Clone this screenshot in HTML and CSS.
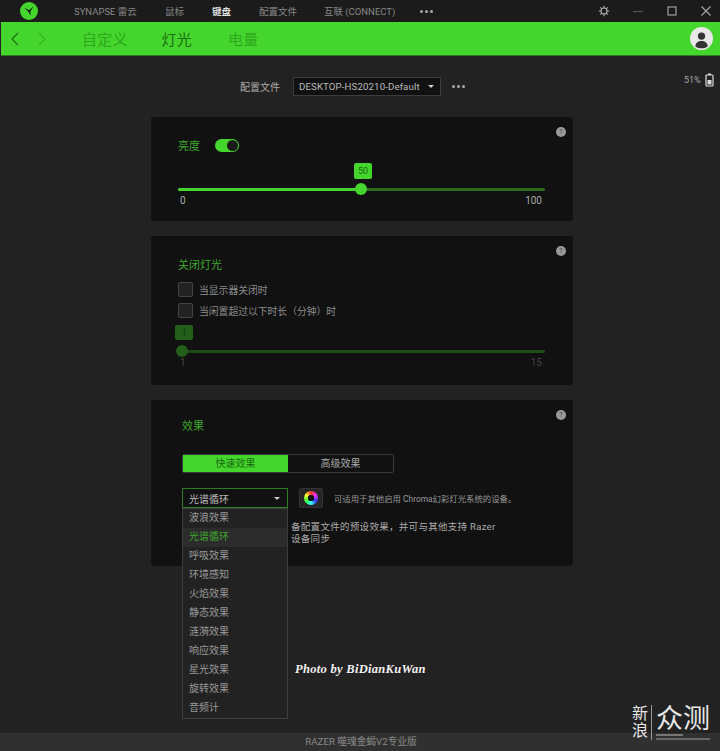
FILE: index.html
```html
<!DOCTYPE html>
<html lang="zh">
<head>
    <meta charset="UTF-8">
    <meta name="viewport" content="width=device-width, initial-scale=1.0">
    <title>Razer Synapse</title>
    <link rel="stylesheet" href="styles.css">
</head>
<body>
    <div class="app">
        <header class="titlebar">
            <div class="logo">
                <svg viewBox="0 0 18 18" width="18" height="18">
                    <circle cx="9" cy="9" r="9" fill="#44d62c"/>
                    <path d="M4 5.5 L9 8.2 L13.5 4.5 L10.3 9.4 L10.6 14 L8.6 10 Z" fill="#161616"/>
                </svg>
            </div>
            <nav class="mainnav">
                <a class="nav-synapse">SYNAPSE 雷云</a>
                <a class="nav-mouse">鼠标</a>
                <a class="nav-keyboard active">键盘</a>
                <a class="nav-profile">配置文件</a>
                <a class="nav-connect">互联 (CONNECT)</a>
                <span class="dots nav-dots"><i></i><i></i><i></i></span>
            </nav>
            <div class="winbtns">
                <svg viewBox="0 0 12 12" width="12" height="12"><circle cx="6" cy="6" r="3" fill="none" stroke="#aaa" stroke-width="1.2"/><path d="M6 0.8V3M6 9v2.2M0.8 6H3M9 6h2.2M2.3 2.3l1.5 1.5M8.2 8.2l1.5 1.5M2.3 9.7l1.5-1.5M8.2 3.8l1.5-1.5" stroke="#aaa" stroke-width="1.2"/></svg>
                <svg viewBox="0 0 12 12" width="12" height="12"><path d="M1 6.5H11" stroke="#555" stroke-width="1.2"/></svg>
                <svg viewBox="0 0 12 12" width="12" height="12"><rect x="2" y="2" width="8" height="8" fill="none" stroke="#aaa" stroke-width="1.1"/></svg>
                <svg viewBox="0 0 12 12" width="12" height="12"><path d="M1.5 1.5L10.5 10.5M10.5 1.5L1.5 10.5" stroke="#aaa" stroke-width="1.1"/></svg>
            </div>
        </header>

        <div class="subbar">
            <svg class="arrow" viewBox="0 0 10 14" width="10" height="14"><path d="M8 1L2 7L8 13" fill="none" stroke="#1f6b17" stroke-width="1.2"/></svg>
            <svg class="arrow arrow-next" viewBox="0 0 10 14" width="10" height="14"><path d="M2 1L8 7L2 13" fill="none" stroke="#3cb526" stroke-width="1.2"/></svg>
            <a class="subtab">自定义</a>
            <a class="subtab current">灯光</a>
            <a class="subtab">电量</a>
            <div class="avatar">
                <svg viewBox="0 0 24 24" width="23" height="23">
                    <circle cx="12" cy="12" r="12" fill="#e8e8e8"/>
                    <circle cx="12" cy="9.5" r="3.8" fill="#333"/>
                    <path d="M5.5 20c0.5-4 3-5.500 6.500-5.500s6 1.500 6.500 5.500c-2 1.600-4 2.300-6.500 2.300s-4.500-0.700-6.500-2.300z" fill="#333"/>
                </svg>
            </div>
        </div>

        <main class="content">
            <div class="profile-row">
                <span class="profile-label">配置文件</span>
                <div class="profile-select">DESKTOP-HS20210-Default<span class="caret"></span></div>
                <span class="dots"><i></i><i></i><i></i></span>
                <div class="battery">
                    <span>51%</span>
                    <svg viewBox="0 0 9 14" width="9" height="14"><rect x="1" y="2" width="7" height="11" rx="1" fill="none" stroke="#ddd" stroke-width="1.2"/><rect x="3" y="0.500" width="3" height="1.500" fill="#ddd"/><rect x="2.500" y="7" width="4" height="4.500" fill="#ddd"/></svg>
                </div>
            </div>

            <section class="card card-brightness">
                <span class="help">?</span>
                <div class="bright-head">
                    <h2>亮度</h2>
                    <span class="toggle"><span class="knob"></span></span>
                </div>
                <div class="slider-wrap">
                    <div class="badge-row"><span class="badge">50</span></div>
                    <div class="track"><div class="fill"></div><span class="thumb"></span></div>
                    <div class="scale"><span>0</span><span>100</span></div>
                </div>
            </section>

            <section class="card card-off">
                <span class="help">?</span>
                <h2>关闭灯光</h2>
                <label class="check"><span class="box"></span>当显示器关闭时</label>
                <label class="check"><span class="box"></span>当闲置超过以下时长（分钟）时</label>
                <div class="slider-wrap off">
                    <span class="badge dim">1</span>
                    <div class="track dim"><span class="thumb"></span></div>
                    <div class="scale"><span>1</span><span>15</span></div>
                </div>
            </section>

            <section class="card card-effect">
                <span class="help">?</span>
                <h2>效果</h2>
                <div class="seg">
                    <span class="seg-on">快速效果</span>
                    <span class="seg-off">高级效果</span>
                </div>
                <div class="effect-row">
                    <div class="effect-select">光谱循环<span class="caret"></span></div>
                    <div class="chroma"><span class="wheel"></span></div>
                    <p class="effect-note">可适用于其他启用 Chroma幻彩灯光系统的设备。</p>
                </div>
                <p class="effect-desc">备配置文件的预设效果，并可与其他支持 Razer<br>设备同步</p>
                <ul class="menu">
                    <li>波浪效果</li>
                    <li class="sel">光谱循环</li>
                    <li>呼吸效果</li>
                    <li>环境感知</li>
                    <li>火焰效果</li>
                    <li>静态效果</li>
                    <li>涟漪效果</li>
                    <li>响应效果</li>
                    <li>星光效果</li>
                    <li>旋转效果</li>
                    <li>音频计</li>
                </ul>
            </section>
        </main>

        <footer class="footer"><span>RAZER 噬魂金蝎V2专业版</span></footer>

        <div class="photo-mark">Photo by BiDianKuWan</div>
        <div class="sina-mark">
            <span class="sina-small">新<br>浪</span>
            <span class="sina-big">众测</span>
        </div>
    </div>
</body>
</html>
```

FILE: styles.css
```css
* {
    box-sizing: border-box;
}
html, body {
    margin: 0;
    height: 100%;
}
body {
    background-color: #222;
    font-family: "Roboto", "Noto Sans CJK SC", sans-serif;
    color: #bbb;
    overflow: hidden;
}
.app {
    position: relative;
    width: 720px;
    height: 751px;
    display: flex;
    flex-direction: column;
    background-color: #222;
}

/* barra superior */
.titlebar {
    height: 22px;
    flex: none;
    display: flex;
    align-items: center;
    background-color: #1b1b1b;
    font-size: 9.5px;
    color: #888;
}
.logo {
    width: 57px;
    padding-left: 20px;
    display: flex;
}
.mainnav {
    display: flex;
    align-items: center;
    padding-left: 17px;
}
.mainnav a {
    white-space: nowrap;
}
.nav-synapse { width: 91px; }
.nav-mouse { width: 47px; }
.nav-keyboard { width: 47px; }
.nav-profile { width: 65px; }
.nav-connect { width: 96px; }
.mainnav .active {
    color: #ddd;
    font-weight: 700;
}
.dots {
    display: inline-flex;
    gap: 2px;
}
.dots i {
    width: 3px;
    height: 3px;
    border-radius: 50%;
    background-color: #aaa;
}
.winbtns {
    margin-left: auto;
    display: flex;
    gap: 22px;
    padding-right: 8px;
}

/* barra verde */
.subbar {
    height: 34px;
    flex: none;
    display: flex;
    align-items: center;
    margin-left: 1px;
    background-color: #44d62c;
    border-bottom: 1px solid #2d7d20;
    font-size: 15px;
}
.arrow {
    margin-left: 9px;
}
.arrow-next {
    margin-left: 17px;
}
.subtab {
    color: #2fa81d;
    margin-right: 36px;
    letter-spacing: 0.2px;
}
.arrow-next + .subtab {
    margin-left: 35px;
}
.subtab.current {
    color: #1e6f12;
    margin-left: -2px;
}
.avatar {
    margin-left: auto;
    margin-right: 7px;
    display: flex;
}

/* contenido */
.content {
    flex: 1;
    display: flex;
    flex-direction: column;
    align-items: flex-start;
    padding-left: 151px;
}
.profile-row {
    position: relative;
    width: 422px;
    height: 61px;
    display: flex;
    align-items: center;
    font-size: 10px;
}
.profile-label {
    margin-left: 89px;
    color: #aaa;
}
.profile-select {
    width: 148px;
    height: 19px;
    margin-left: 13px;
    margin-right: 11px;
    padding-left: 5px;
    display: flex;
    align-items: center;
    background-color: #111;
    border: 1px solid #3c3c3c;
    color: #bbb;
    font-size: 9.7px;
    letter-spacing: 0.1px;
}
.caret {
    width: 0;
    height: 0;
    margin-left: auto;
    margin-right: 6px;
    border-left: 3px solid transparent;
    border-right: 3px solid transparent;
    border-top: 3px solid #ccc;
}
.battery {
    position: absolute;
    left: 533px;
    top: 17px;
    display: flex;
    align-items: center;
    gap: 4px;
    font-size: 9px;
    color: #aaa;
}

.card {
    position: relative;
    width: 422px;
    background-color: #111;
    border-radius: 3px;
}
.card h2 {
    margin: 0;
    font-size: 11px;
    line-height: 14px;
    font-weight: 400;
    color: #3da82a;
}
.help {
    position: absolute;
    top: 10px;
    right: 7px;
    width: 10px;
    height: 10px;
    border-radius: 50%;
    background-color: #999;
    color: #444;
    font-size: 7px;
    line-height: 10px;
    text-align: center;
}

.card-brightness {
    height: 104px;
    padding: 22px 28px 0 27px;
}
.bright-head {
    display: flex;
    align-items: center;
    gap: 15px;
    height: 13px;
}
.bright-head h2 {
    padding-top: 2px;
}
.toggle {
    width: 24px;
    height: 13px;
    border-radius: 7px;
    background-color: #44d62c;
    position: relative;
}
.knob {
    position: absolute;
    right: 1px;
    top: 1px;
    width: 11px;
    height: 11px;
    border-radius: 50%;
    background-color: #1a1a1a;
}
.slider-wrap {
    margin-top: 11px;
    font-size: 10px;
}
.badge-row {
    padding-left: 176px;
    display: flex;
}
.badge {
    display: block;
    width: 18px;
    height: 16px;
    border-radius: 2px;
    background-color: #44d62c;
    color: #1a6a10;
    font-size: 9px;
    line-height: 16px;
    text-align: center;
}
.badge.dim {
    width: 18px;
    height: 15px;
    margin-left: -3px;
    background-color: #235e1a;
    color: #123a0d;
}
.track {
    position: relative;
    height: 3px;
    margin-top: 9px;
    border-radius: 2px;
    background-color: #2a6b1e;
}
.fill {
    width: 183px;
    height: 100%;
    border-radius: 2px;
    background-color: #44d62c;
}
.thumb {
    position: absolute;
    left: 177px;
    top: -5px;
    width: 12px;
    height: 12px;
    border-radius: 50%;
    background-color: #44d62c;
}
.scale {
    display: flex;
    justify-content: space-between;
    margin-top: 4px;
    padding: 0 3px 0 2px;
    color: #aaa;
}

.card-off {
    height: 149px;
    margin-top: 15px;
    padding: 23px 28px 0 27px;
}
.check {
    display: flex;
    align-items: center;
    gap: 6px;
    height: 15px;
    margin-top: 6px;
    font-size: 9.8px;
    color: #8c8c8c;
}
.card-off h2 + .check {
    margin-top: 9px;
}
.box {
    width: 15px;
    height: 15px;
    border: 1px solid #444;
    border-radius: 2px;
    background-color: #222;
}
.slider-wrap.off {
    margin-top: 7px;
}
.track.dim {
    margin-top: 10px;
    background-color: #1f4d17;
}
.track.dim .thumb {
    left: -2px;
    background-color: #235e1a;
}
.off .scale {
    color: #444;
}

.card-effect {
    height: 166px;
    margin-top: 15px;
    padding: 20px 0 0 31px;
}
.seg {
    display: flex;
    width: 212px;
    height: 19px;
    margin-top: 20px;
    border: 1px solid #3a3a3a;
    border-radius: 2px;
    font-size: 10px;
    line-height: 17px;
    text-align: center;
}
.seg-on {
    width: 105px;
    background-color: #44d62c;
    color: #1a6a10;
}
.seg-off {
    flex: 1;
    color: #aaa;
}
.effect-row {
    display: flex;
    align-items: center;
    margin-top: 15px;
}
.effect-select {
    width: 106px;
    height: 20px;
    padding-left: 6px;
    display: flex;
    align-items: center;
    border: 1px solid #2d7d20;
    background-color: #111;
    font-size: 10px;
    color: #bbb;
}
.effect-select .caret {
    margin-right: 7px;
}
.chroma {
    width: 24px;
    height: 20px;
    margin-left: 11px;
    display: flex;
    align-items: center;
    justify-content: center;
    background-color: #262626;
    border: 1px solid #333;
    border-radius: 2px;
}
.wheel {
    width: 14px;
    height: 14px;
    border-radius: 50%;
    background: radial-gradient(circle, #111 0 3px, transparent 3.5px), conic-gradient(#f33, #f3f, #33f, #3ff, #3f3, #ff3, #f33);
}
.effect-note {
    margin: 0 0 0 11px;
    font-size: 8.4px;
    color: #999;
}
.effect-desc {
    margin: 13px 0 0 106px;
    padding-left: 3px;
    font-size: 9.5px;
    line-height: 12px;
    color: #aaa;
    white-space: nowrap;
    letter-spacing: 0.3px;
}

/* desplegable */
.menu {
    position: absolute;
    left: 31px;
    top: 108px;
    width: 106px;
    margin: 0;
    padding: 0;
    list-style: none;
    background-color: #222;
    border: 1px solid #3d3d3d;
    font-size: 10px;
    color: #999;
}
.menu li {
    height: 19px;
    padding-left: 6px;
    line-height: 18px;
}
.menu .sel {
    background-color: #2c2c2c;
    color: #3da82a;
}

.footer {
    height: 18px;
    flex: none;
    display: flex;
    justify-content: center;
    background-color: #303030;
    color: #888;
    font-size: 9.7px;
    line-height: 18px;
    padding-left: 2px;
}

.photo-mark {
    position: absolute;
    left: 295px;
    top: 662px;
    font-family: "Liberation Serif", serif;
    font-style: italic;
    font-weight: 700;
    font-size: 12.5px;
    color: #f2f2f2;
    letter-spacing: 0.3px;
}
.sina-mark {
    position: absolute;
    left: 632px;
    top: 705px;
    display: flex;
    gap: 4px;
    color: #e8e8e8;
}
.sina-small {
    font-size: 16px;
    line-height: 17px;
    padding-right: 3px;
    border-right: 1px solid #999;
}
.sina-big {
    font-size: 27px;
    line-height: 28px;
    height: 35px;
    background: linear-gradient(#777, #777) 0 29px / 27px 2px no-repeat, linear-gradient(#666, #666) 0 33px / 54px 2px no-repeat;
}
```
